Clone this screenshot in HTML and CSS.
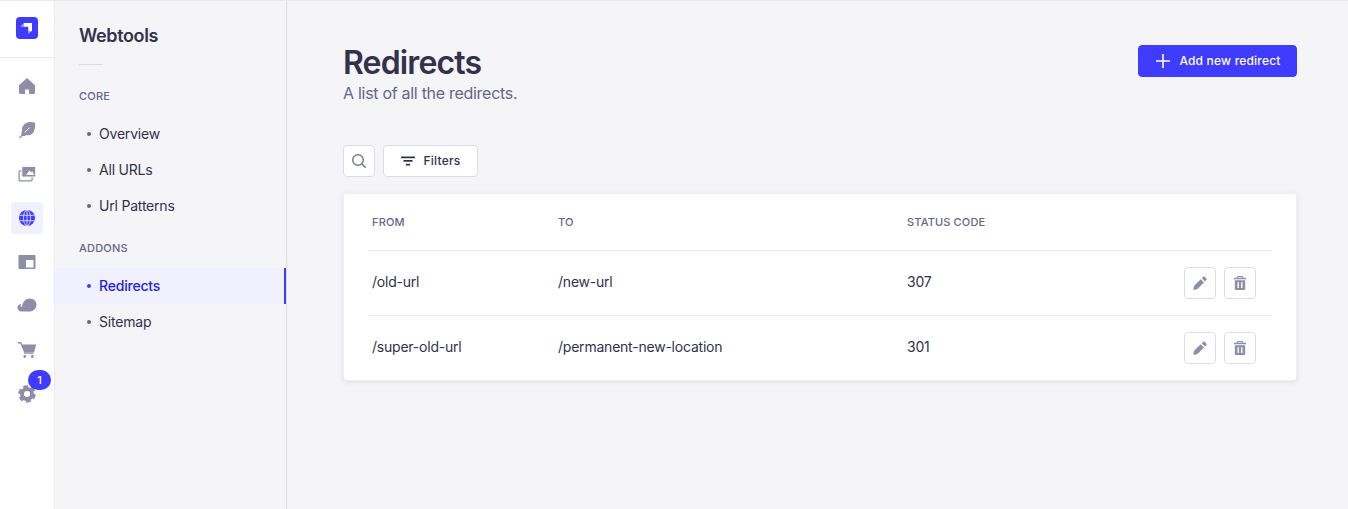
FILE: index.html
```html
<!DOCTYPE html>
<html lang="en">
<head>
<meta charset="utf-8">
<title>Redirects</title>
<link rel="stylesheet" href="styles.css">
</head>
<body>
<div class="app">
  <nav class="rail">
    <div class="rail-logo">
      <svg class="logo" width="22" height="22" viewBox="0 0 22 22"><rect width="22" height="22" rx="4" fill="#3f3bff"/><path d="M8 6h8v8h-3.700v-4.300H8z" fill="#fff"/><path d="M8 6v3.700H4.200z" fill="#fff" opacity=".55"/><path d="M12.300 14H16l-3.700 3z" fill="#fff" opacity=".55"/></svg>
    </div>
    <ul class="rail-items">
      <li class="rail-item"><svg width="18" height="18" viewBox="0 0 18 18"><path class="ic" d="M9 1 1 8.300v7.200C1 16.300 1.700 17 2.500 17H7v-4.500h4V17h4.500c.8 0 1.500-.7 1.500-1.500V8.300z"/></svg></li>
      <li class="rail-item"><svg width="18" height="18" viewBox="0 0 18 18"><path class="ic" d="M12.500 1C9.500 1 6.500 2.500 5 5c-1 1.700-1.200 3.500-.9 5L3.500 11v4h3.500l1-1c2.500.6 5 0 6.800-1.800C16.700 10.300 17.500 6 17 1.800c-1.300-.5-2.900-.8-4.500-.8z"/><path d="M6.500 11.800 11.500 6.500" fill="none" stroke="#fff" stroke-width=".9"/><path class="ic-line" d="M1.500 17 6.500 11.800"/></svg></li>
      <li class="rail-item"><svg width="18" height="18" viewBox="0 0 18 18"><rect class="ic-line" x="1.100" y="5.800" width="13" height="10" rx="1.200"/><rect class="ic" x="3.800" y="1.500" width="13.800" height="10.500" rx="1.200" stroke="#fff" stroke-width=".9"/><path d="m8 10 3.500-4.500 1.800 2 1-1.200 2 3.700z" fill="#fff"/></svg></li>
      <li class="rail-item is-active"><svg width="18" height="18" viewBox="0 0 18 18"><circle cx="9" cy="9" r="8" fill="#3f3bff"/><g fill="none" stroke="#f0f0ff" stroke-width=".8"><ellipse cx="9" cy="9" rx="3.500" ry="8"/><path d="M9 1v16M1.600 6.300h14.800M1.600 11.700h14.800"/></g></svg></li>
      <li class="rail-item"><svg width="18" height="18" viewBox="0 0 18 18"><path class="ic" fill-rule="evenodd" d="M1.500 2h15c.6 0 1 .4 1 1v12c0 .6-.4 1-1 1h-15c-.6 0-1-.4-1-1V3c0-.6.4-1 1-1zM8 7v7.500h7.500V7z"/></svg></li>
      <li class="rail-item"><svg width="20" height="18" viewBox="0 0 20 18"><path class="ic" d="M13 1.500c3.600 0 6.500 2.800 6.500 6.300 0 3.700-3 6.700-6.700 6.700H4.500C2.300 14.500.5 12.800.5 10.700c0-1.900 1.300-3.400 3.200-3.700.2 0 .4.200.3.400-.3.500-.5.900-.4 1.500.1.600.7 1 1.300.9C5.500 5 8.800 1.500 13 1.500z"/></svg></li>
      <li class="rail-item"><svg width="20" height="18" viewBox="0 0 20 18"><path class="ic" d="M1 1h3.200l.9 2.500h14L17 11.500H7.200L3.300 2.500H1z"/><path class="ic" d="M6.700 11.500h9.800v1.300H7.200z"/><circle class="ic" cx="7.800" cy="15.500" r="1.400"/><circle class="ic" cx="15.300" cy="15.500" r="1.400"/></svg></li>
      <li class="rail-item has-badge"><svg width="18" height="18" viewBox="0 0 18 18"><circle class="ic-ring" cx="9" cy="9" r="5"/><circle class="ic-teeth" cx="9" cy="9" r="7" stroke-dasharray="4.500 2.830"/></svg><span class="badge">1</span></li>
    </ul>
  </nav>

  <aside class="subnav">
    <h2 class="subnav-title">Webtools</h2>
    <div class="subnav-rule"></div>
    <h3 class="subnav-group first">Core</h3>
    <ul class="subnav-list">
      <li class="subnav-link">Overview</li>
      <li class="subnav-link">All URLs</li>
      <li class="subnav-link">Url Patterns</li>
    </ul>
    <h3 class="subnav-group">Addons</h3>
    <ul class="subnav-list">
      <li class="subnav-link is-current">Redirects</li>
      <li class="subnav-link">Sitemap</li>
    </ul>
  </aside>

  <main class="main">
    <header class="page-head">
      <div>
        <h1 class="page-title">Redirects</h1>
        <p class="page-sub">A list of all the redirects.</p>
      </div>
      <button class="btn-primary"><svg width="14" height="14" viewBox="0 0 14 14"><path d="M6.200 0h1.600v6.200H14v1.600H7.800V14H6.200V7.800H0V6.200h6.200z" fill="#fff"/></svg>Add new redirect</button>
    </header>

    <div class="toolbar">
      <button class="icon-btn"><svg width="16" height="16" viewBox="0 0 16 16" fill="none" stroke="#7b7b98" stroke-width="1.500"><circle cx="7" cy="7" r="5.300"/><path d="m10.900 10.900 3.800 3.800"/></svg></button>
      <button class="btn-filter"><svg width="14" height="10" viewBox="0 0 14 10"><path d="M0 .5h14v1.700H0zM2.500 4.100h9v1.700h-9zM5 7.800h4v1.700H5z" fill="#32324d"/></svg>Filters</button>
    </div>

    <section class="card">
      <table class="table">
        <thead>
          <tr><th class="col-from">From</th><th class="col-to">To</th><th class="col-status">Status code</th><th></th></tr>
        </thead>
        <tbody>
          <tr>
            <td>/old-url</td><td>/new-url</td><td>307</td>
            <td><div class="actions">
              <button class="action"><svg width="14" height="14" viewBox="0 0 14 14"><path class="ic" d="M7.800 3.200 11 6.400 5 12.400c-1 .8-2.800 1.200-4 1.300-.4 0-.6-.2-.6-.6.100-1.200.5-3 1.300-4zM8.800 2.200 10.200.8c.4-.4 1-.4 1.400 0l1.800 1.800c.4.4.4 1 0 1.400L12 5.400z"/></svg></button>
              <button class="action"><svg width="14" height="14" viewBox="0 0 14 14"><path class="ic" fill-rule="evenodd" d="M5 0h4c.5 0 .9.400.9 1v.7H13V3.200H1V1.700h3.100V1c0-.6.400-1 .9-1zm.3 1.100v.6h3.400v-.6zM1.800 4.200h10.400V13c0 .6-.4 1-1 1H2.800c-.6 0-1-.4-1-1zm2.700 2v5.800h1.400V6.200zm3.600 0v5.800h1.400V6.200z"/></svg></button>
            </div></td>
          </tr>
          <tr>
            <td>/super-old-url</td><td>/permanent-new-location</td><td>301</td>
            <td><div class="actions">
              <button class="action"><svg width="14" height="14" viewBox="0 0 14 14"><path class="ic" d="M7.800 3.200 11 6.400 5 12.400c-1 .8-2.800 1.200-4 1.300-.4 0-.6-.2-.6-.6.100-1.200.5-3 1.300-4zM8.800 2.200 10.200.8c.4-.4 1-.4 1.400 0l1.800 1.800c.4.4.4 1 0 1.400L12 5.400z"/></svg></button>
              <button class="action"><svg width="14" height="14" viewBox="0 0 14 14"><path class="ic" fill-rule="evenodd" d="M5 0h4c.5 0 .9.400.9 1v.7H13V3.200H1V1.700h3.100V1c0-.6.400-1 .9-1zm.3 1.100v.6h3.400v-.6zM1.800 4.200h10.400V13c0 .6-.4 1-1 1H2.800c-.6 0-1-.4-1-1zm2.700 2v5.800h1.400V6.200zm3.600 0v5.800h1.400V6.200z"/></svg></button>
            </div></td>
          </tr>
        </tbody>
      </table>
    </section>
  </main>
</div>
</body>
</html>
```
FILE: styles.css
```css
* { box-sizing: border-box; }
html, body { margin: 0; height: 100%; }
body { font-family: Inter, "Liberation Sans", sans-serif; background: #f5f5f8; color: #32324d; overflow: hidden; }
h1, h2, h3, p, ul { margin: 0; padding: 0; }
ul { list-style: none; }
button { font-family: inherit; cursor: pointer; }
.ic { fill: #8e8ea9; }
.ic-line { fill: none; stroke: #8e8ea9; stroke-width: 1.300; }
.ic-ring { fill: none; stroke: #8e8ea9; stroke-width: 4; }
.ic-teeth { fill: none; stroke: #8e8ea9; stroke-width: 3.500; }

.app { display: flex; height: 509px; border-top: 1px solid #eaeaef; }

.rail { width: 55px; flex: none; background: #fff; border-right: 1px solid #eaeaef; display: flex; flex-direction: column; }
.rail-logo { height: 57px; flex: none; display: flex; align-items: center; justify-content: center; border-bottom: 1px solid #eaeaef; padding-bottom: 3px; }
.logo { display: block; }
.rail-items { display: flex; flex-direction: column; gap: 12px; padding: 12px 0 0 11px; }
.rail-item { width: 32px; height: 32px; border-radius: 4px; display: flex; align-items: center; justify-content: center; position: relative; }
.rail-item.is-active { background: #f0f0ff; }
.badge { position: absolute; left: 17px; top: -8px; width: 23px; height: 20px; border-radius: 10px; background: #3f3bff; color: #fff; font-size: 11px; font-weight: 500; display: flex; align-items: center; justify-content: center; }

.subnav { width: 232px; flex: none; background: #f5f5f8; border-right: 1px solid #dcdce4; }
.subnav-title { font-size: 18px; font-weight: 600; line-height: 22px; letter-spacing: -.37px; padding: 24px 0 0 24px; }
.subnav-rule { width: 24px; height: 1px; background: #dcdce4; margin: 17px 0 0 24px; }
.subnav-group { font-size: 11px; font-weight: 500; line-height: 16px; letter-spacing: .2px; color: #666687; text-transform: uppercase; padding: 16px 0 0 24px; height: 44px; }
.subnav-group.first { height: 51px; padding-top: 23px; }
.subnav-list { display: flex; flex-direction: column; }
.subnav-link { height: 36px; display: flex; align-items: center; gap: 8px; padding: 0 0 1px 32px; font-size: 14px; letter-spacing: -.2px; color: #32324d; position: relative; }
.subnav-link::before { content: ""; width: 4px; height: 4px; border-radius: 50%; background: #666687; flex: none; }
.subnav-link.is-current { background: #f0f0ff; color: #271fe0; font-weight: 500; border-right: 2px solid #3f3bff; }
.subnav-link.is-current::before { background: #3f3bff; }

.main { flex: 1; min-width: 0; padding: 44px 51px 0 56px; }
.page-head { display: flex; justify-content: space-between; align-items: flex-start; }
.page-title { font-size: 32px; font-weight: 600; line-height: 36px; letter-spacing: -.85px; }
.page-sub { font-size: 16px; line-height: 24px; letter-spacing: -.29px; color: #666687; }
.btn-primary { height: 32px; width: 159px; padding: 0 0 1px 2px; display: flex; align-items: center; justify-content: center; gap: 9px; background: #3f3bff; color: #fff; border: 1px solid #3f3bff; border-radius: 4px; font-size: 12px; font-weight: 500; letter-spacing: .2px; }

.toolbar { display: flex; gap: 8px; margin-top: 40px; }
.icon-btn { width: 32px; height: 32px; padding: 0; background: #fff; border: 1px solid #dcdce4; border-radius: 4px; display: flex; align-items: center; justify-content: center; }
.btn-filter { height: 32px; width: 95px; padding: 0 0 1px; display: flex; align-items: center; justify-content: center; gap: 9px; background: #fff; border: 1px solid #dcdce4; border-radius: 4px; font-size: 12px; font-weight: 500; letter-spacing: .2px; color: #32324d; }

.card { margin-top: 16px; background: #fff; border: 1px solid #f0f0f4; border-radius: 4px; box-shadow: 0 1px 4px rgba(33,33,52,.1); padding: 3px 24px 0; height: 188px; }
.table { width: 100%; border-collapse: collapse; table-layout: fixed; }
.table th { height: 53px; text-align: left; font-size: 11px; font-weight: 500; letter-spacing: .15px; text-transform: uppercase; color: #666687; padding: 0 4px 2px; }
.table td { height: 65px; font-size: 14px; letter-spacing: -.22px; color: #32324d; border-top: 1px solid #eaeaef; padding: 0 4px 2px; }
.table td:last-child { padding-bottom: 0; }
.col-from { width: 186px; }
.col-to { width: 349px; }
.col-status { width: 260px; }
.actions { display: flex; justify-content: flex-end; gap: 8px; padding-right: 12px; }
.action { width: 32px; height: 32px; padding: 0; background: #fff; border: 1px solid #dcdce4; border-radius: 4px; display: flex; align-items: center; justify-content: center; }
```
